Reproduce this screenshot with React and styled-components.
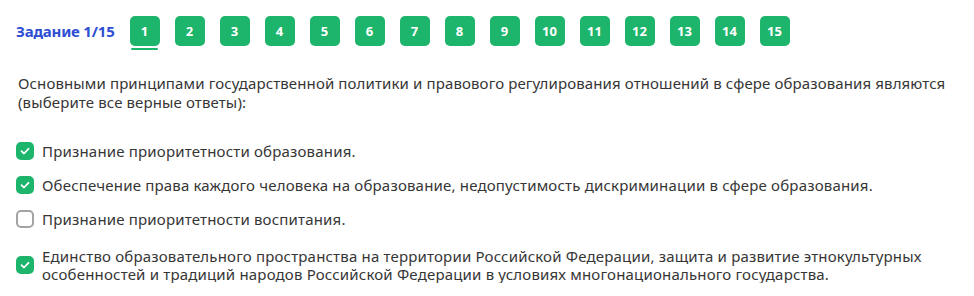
import React, { useState } from 'react';
import styled, { createGlobalStyle } from 'styled-components';

const GlobalStyle = createGlobalStyle`
  body {
    margin: 0;
    background: #ffffff;
    font-family: 'Noto Sans', 'Liberation Sans', sans-serif;
  }
`;

const questions = Array.from({ length: 15 }, (_, i) => i + 1);

const answers = [
  { id: 1, text: 'Признание приоритетности образования.', checked: true },
  {
    id: 2,
    text: 'Обеспечение права каждого человека на образование, недопустимость дискриминации в сфере образования.',
    checked: true,
  },
  { id: 3, text: 'Признание приоритетности воспитания.', checked: false },
  {
    id: 4,
    text: 'Единство образовательного пространства на территории Российской Федерации, защита и развитие этнокультурных особенностей и традиций народов Российской Федерации в условиях многонационального государства.',
    checked: true,
    long: true,
  },
];

const App = () => {
  const [current, setCurrent] = useState(1);

  return (
    <Page>
      <GlobalStyle />
      <Header>
        <Title>Задание {current}/15</Title>
        <NavList>
          {questions.map(n => (
            <NavButton key={n} $active={n === current} onClick={() => setCurrent(n)}>
              {n}
            </NavButton>
          ))}
        </NavList>
      </Header>

      <Question>
        Основными принципами государственной политики и правового регулирования отношений в сфере
        образования являются (выберите все верные ответы):
      </Question>

      <AnswerList>
        {answers.map(item => (
          <Answer key={item.id} $long={item.long}>
            <Box $checked={item.checked}>
              {item.checked && (
                <svg width="12" height="12" viewBox="0 0 12 12" fill="none">
                  <path
                    d="M2.5 6.2 L5 8.5 L9.5 3.8"
                    stroke="#ffffff"
                    strokeWidth="1.8"
                    strokeLinecap="round"
                    strokeLinejoin="round"
                  />
                </svg>
              )}
            </Box>
            <AnswerText>{item.text}</AnswerText>
          </Answer>
        ))}
      </AnswerList>
    </Page>
  );
};

const Page = styled.div`
  padding: 16px 16px 0 16px;
  width: 974px;
  box-sizing: border-box;
`;

const Header = styled.div`
  display: flex;
  align-items: flex-start;
  gap: 15px;
`;

const Title = styled.div`
  height: 30px;
  line-height: 30px;
  font-size: 15px;
  font-weight: 700;
  letter-spacing: -0.2px;
  color: #2e4fd3;
  white-space: nowrap;
`;

const NavList = styled.div`
  display: flex;
  gap: 15px;
`;

const NavButton = styled.div`
  position: relative;
  width: 30px;
  height: 30px;
  border-radius: 5px;
  background: #1db46b;
  color: #ffffff;
  font-size: 13px;
  font-weight: 700;
  display: flex;
  align-items: center;
  justify-content: center;
  cursor: pointer;
  margin-bottom: 4px;

  &::after {
    content: '';
    display: ${p => (p.$active ? 'block' : 'none')};
    position: absolute;
    left: 1px;
    right: 2px;
    bottom: -4px;
    height: 2px;
    border-radius: 1px;
    background: #1db46b;
  }
`;

const Question = styled.div`
  margin-top: 24px;
  padding-left: 2px;
  font-size: 15px;
  line-height: 19px;
  letter-spacing: 0.12px;
  color: #363636;
`;

const AnswerList = styled.div`
  display: flex;
  flex-direction: column;
  gap: 16px;
  margin-top: 30px;
`;

const Answer = styled.label`
  display: flex;
  align-items: center;
  gap: 8px;
  padding-top: ${p => (p.$long ? '3px' : '0')};
`;

const Box = styled.span`
  flex: 0 0 auto;
  width: 18px;
  height: 18px;
  box-sizing: border-box;
  border-radius: 5px;
  background: ${p => (p.$checked ? '#1db46b' : '#ffffff')};
  border: ${p => (p.$checked ? 'none' : '2px solid #a3a3a3')};
  display: flex;
  align-items: center;
  justify-content: center;
`;

const AnswerText = styled.div`
  flex: 1;
  font-size: 15px;
  line-height: 18px;
  letter-spacing: 0.18px;
  color: #363636;
`;

export default App;
